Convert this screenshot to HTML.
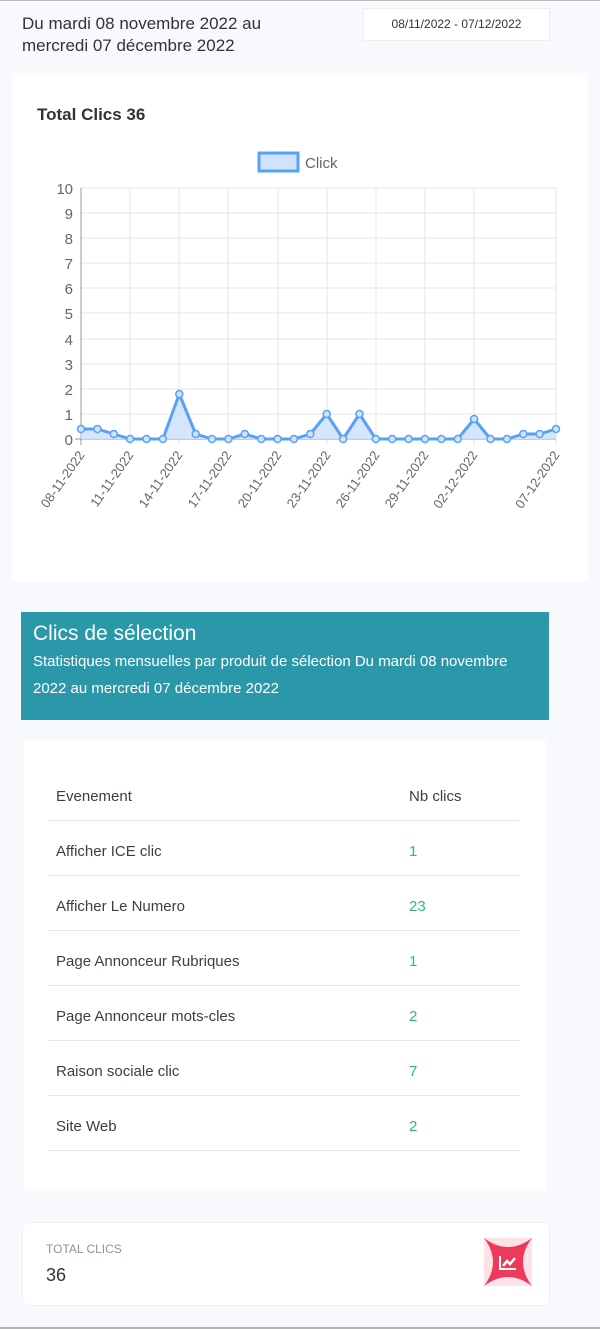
<!DOCTYPE html>
<html><head><meta charset="utf-8"><style>
body{margin:0;width:600px;height:1329px;background:#f8f9fd;font-family:"Liberation Sans",sans-serif;position:relative;overflow:hidden;color:#333}
.a{position:absolute}
.row{position:absolute;left:48px;width:472px;height:54px;border-bottom:1px solid #e6e8ec;font-size:15px;color:#3a3f45}
.row span{position:absolute;top:22px}
.row .n{left:361px;color:#2dbb74}
</style></head><body>
<div class="a" style="left:0;top:0;width:600px;height:1px;background:#bbb"></div>
<div class="a" style="left:22px;top:13px;font-size:17px;line-height:22px;color:#333">Du mardi 08 novembre 2022 au<br>mercredi 07 décembre 2022</div>
<div class="a" style="left:363px;top:8px;width:185px;height:31px;background:#fff;border:1px solid #eceef2;font-size:12px;line-height:31px;text-align:center;color:#333">08/11/2022 - 07/12/2022</div>
<div class="a" style="left:12px;top:73px;width:576px;height:509px;background:#fff"></div>
<div class="a" style="left:37px;top:105px;font-size:17px;font-weight:bold;color:#333">Total Clics 36</div>
<svg class="a" style="left:0;top:0" width="600" height="600">
<rect x="259" y="153" width="39" height="18" fill="#cfe3fb" stroke="#5aa0f5" stroke-width="3"/>
<text x="305" y="168" font-size="15" fill="#666" font-family="Liberation Sans Narrow,Liberation Sans">Click</text>
<g stroke="#e5e5e5" stroke-width="1">
<line x1="81" y1="188" x2="556" y2="188"/><line x1="81" y1="213" x2="556" y2="213"/><line x1="81" y1="238" x2="556" y2="238"/><line x1="81" y1="263" x2="556" y2="263"/><line x1="81" y1="288" x2="556" y2="288"/><line x1="81" y1="313" x2="556" y2="313"/><line x1="81" y1="339" x2="556" y2="339"/><line x1="81" y1="364" x2="556" y2="364"/><line x1="81" y1="389" x2="556" y2="389"/><line x1="81" y1="414" x2="556" y2="414"/>
<line x1="130" y1="188" x2="130" y2="445"/><line x1="179" y1="188" x2="179" y2="445"/><line x1="228" y1="188" x2="228" y2="445"/><line x1="278" y1="188" x2="278" y2="445"/><line x1="327" y1="188" x2="327" y2="445"/><line x1="376" y1="188" x2="376" y2="445"/><line x1="425" y1="188" x2="425" y2="445"/><line x1="474" y1="188" x2="474" y2="445"/><line x1="556" y1="188" x2="556" y2="445"/>
</g>
<line x1="81" y1="188" x2="81" y2="445" stroke="#999"/><line x1="75" y1="439" x2="556" y2="439" stroke="#999"/>
<g font-size="15" fill="#666" text-anchor="end" font-family="Liberation Sans Narrow,Liberation Sans">
<text x="73" y="194">10</text><text x="73" y="219">9</text><text x="73" y="244">8</text><text x="73" y="269">7</text><text x="73" y="294">6</text><text x="73" y="319">5</text><text x="73" y="345">4</text><text x="73" y="370">3</text><text x="73" y="395">2</text><text x="73" y="420">1</text><text x="73" y="445">0</text>
</g>
<g font-size="13" fill="#666" text-anchor="end" font-family="Liberation Sans Narrow,Liberation Sans">
<text transform="translate(85,455) rotate(-55)">08-11-2022</text><text transform="translate(134,455) rotate(-55)">11-11-2022</text><text transform="translate(183,455) rotate(-55)">14-11-2022</text><text transform="translate(232,455) rotate(-55)">17-11-2022</text><text transform="translate(282,455) rotate(-55)">20-11-2022</text><text transform="translate(331,455) rotate(-55)">23-11-2022</text><text transform="translate(380,455) rotate(-55)">26-11-2022</text><text transform="translate(429,455) rotate(-55)">29-11-2022</text><text transform="translate(478,455) rotate(-55)">02-12-2022</text><text transform="translate(560,455) rotate(-55)">07-12-2022</text>
</g>
<polygon fill="#cfe3fb" opacity="0.9" points="81,439 81,429 97.4,429 113.8,434 130.1,439 146.5,439 162.9,439 179.3,394 195.7,434 212,439 228.4,439 244.8,434 261.2,439 277.6,439 293.9,439 310.3,434 326.7,414 343.1,439 359.5,414 375.8,439 392.2,439 408.6,439 425,439 441.4,439 457.7,439 474.1,419 490.5,439 506.9,439 523.3,434 539.6,434 556,429 556,439"/>
<polyline fill="none" stroke="#5aa0f5" stroke-width="3" stroke-linejoin="round" points="81,429 97.4,429 113.8,434 130.1,439 146.5,439 162.9,439 179.3,394 195.7,434 212,439 228.4,439 244.8,434 261.2,439 277.6,439 293.9,439 310.3,434 326.7,414 343.1,439 359.5,414 375.8,439 392.2,439 408.6,439 425,439 441.4,439 457.7,439 474.1,419 490.5,439 506.9,439 523.3,434 539.6,434 556,429"/>
<g fill="#cfe3fb" stroke="#5aa0f5" stroke-width="1.5">
<circle cx="81" cy="429" r="3.5"/><circle cx="97.4" cy="429" r="3.5"/><circle cx="113.8" cy="434" r="3.5"/><circle cx="130.1" cy="439" r="3.5"/><circle cx="146.5" cy="439" r="3.5"/><circle cx="162.9" cy="439" r="3.5"/><circle cx="179.3" cy="394" r="3.5"/><circle cx="195.7" cy="434" r="3.5"/><circle cx="212" cy="439" r="3.5"/><circle cx="228.4" cy="439" r="3.5"/><circle cx="244.8" cy="434" r="3.5"/><circle cx="261.2" cy="439" r="3.5"/><circle cx="277.6" cy="439" r="3.5"/><circle cx="293.9" cy="439" r="3.5"/><circle cx="310.3" cy="434" r="3.5"/><circle cx="326.7" cy="414" r="3.5"/><circle cx="343.1" cy="439" r="3.5"/><circle cx="359.5" cy="414" r="3.5"/><circle cx="375.8" cy="439" r="3.5"/><circle cx="392.2" cy="439" r="3.5"/><circle cx="408.6" cy="439" r="3.5"/><circle cx="425" cy="439" r="3.5"/><circle cx="441.4" cy="439" r="3.5"/><circle cx="457.7" cy="439" r="3.5"/><circle cx="474.1" cy="419" r="3.5"/><circle cx="490.5" cy="439" r="3.5"/><circle cx="506.9" cy="439" r="3.5"/><circle cx="523.3" cy="434" r="3.5"/><circle cx="539.6" cy="434" r="3.5"/><circle cx="556" cy="429" r="3.5"/>
</g>
</svg>
<div class="a" style="left:21px;top:612px;width:528px;height:108px;background:#2b98aa;color:#fff">
<div style="position:absolute;left:12px;top:10px;font-size:21px">Clics de sélection</div>
<div style="position:absolute;left:12px;top:36px;width:510px;font-size:15px;line-height:27px">Statistiques mensuelles par produit de sélection Du mardi 08 novembre 2022 au mercredi 07 décembre 2022</div>
</div>
<div class="a" style="left:24px;top:740px;width:522px;height:451px;background:#fff"></div>
<div class="row" style="top:766px"><span style="left:8px">Evenement</span><span style="left:361px">Nb clics</span></div>
<div class="row" style="top:821px"><span style="left:8px">Afficher ICE clic</span><span class="n">1</span></div>
<div class="row" style="top:876px"><span style="left:8px">Afficher Le Numero</span><span class="n">23</span></div>
<div class="row" style="top:931px"><span style="left:8px">Page Annonceur Rubriques</span><span class="n">1</span></div>
<div class="row" style="top:986px"><span style="left:8px">Page Annonceur mots-cles</span><span class="n">2</span></div>
<div class="row" style="top:1041px"><span style="left:8px">Raison sociale clic</span><span class="n">7</span></div>
<div class="row" style="top:1096px"><span style="left:8px">Site Web</span><span class="n">2</span></div>
<div class="a" style="left:22px;top:1222px;width:526px;height:82px;background:#fff;border-radius:6px;border:1px solid #eef0f3"></div>
<div class="a" style="left:46px;top:1242px;font-size:12px;color:#8a93a0">TOTAL CLICS</div>
<div class="a" style="left:46px;top:1265px;font-size:18px;color:#333">36</div>
<svg class="a" style="left:484px;top:1238px" width="48" height="48" viewBox="0 0 48 48">
<rect width="48" height="48" fill="#ee3a5a"/>
<path d="M0 0 Q24 18 48 0 Z M0 48 Q24 30 48 48 Z M0 0 Q18 24 0 48 Z M48 0 Q30 24 48 48 Z" fill="#fbe3e8"/>
<path d="M16 18 V31 H32" stroke="#fff" stroke-width="2" fill="none"/>
<path d="M19 28 L23 23 L26 26 L31 20" stroke="#fff" stroke-width="2.5" fill="none"/>
</svg>
<div class="a" style="left:0;top:1327px;width:600px;height:2px;background:#b5b5b5"></div>
</body></html>
